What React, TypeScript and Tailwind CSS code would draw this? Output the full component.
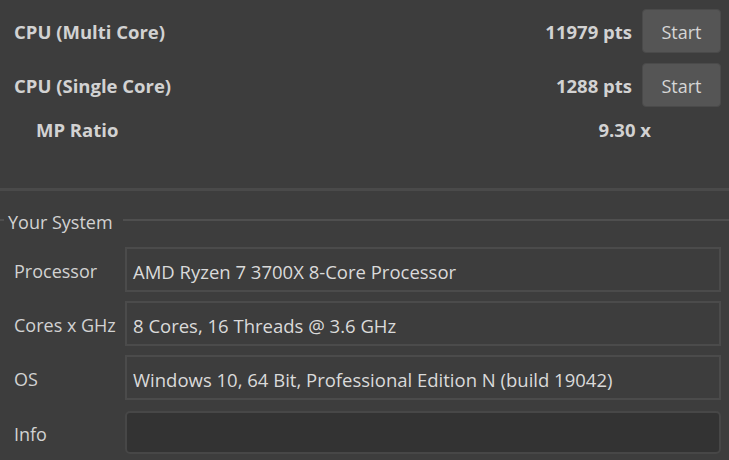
const FONT = "font-['Open_Sans','Noto_Sans',sans-serif]";

function ScoreRow({ label, score }: { label: string; score: string }) {
  return (
    <div className="flex items-center h-[44px] mb-[10px]">
      <p className="flex-1 font-bold text-[18.5px] text-[#d2d2d2] pt-[2px]">{label}</p>
      <p className="font-bold text-[18.5px] text-[#d2d2d2] mr-[10px] pt-[2px]">{score}</p>
      <button
        type="button"
        className="w-[79px] h-[44px] rounded-[4px] bg-[#555555] border border-[#4a4a4a] text-[18px] text-[#d6d6d6] pt-[2px]"
      >
        Start
      </button>
    </div>
  );
}

function InfoRow({ label, value, last }: { label: string; value?: string; last?: boolean }) {
  return (
    <div className={`flex items-center ${last ? "mt-[2px]" : ""}`}>
      <p className="w-[125px] pl-[14px] pt-[4px] text-[18px] text-[#d2d2d2] whitespace-nowrap">{label}</p>
      {last ? (
        <div className="flex-1 h-[43px] mr-[8px] rounded-[5px] border-2 border-[#474747] bg-[#333333]" />
      ) : (
        <div className="flex-1 h-[45px] mr-[8px] border-2 border-[#4b4b4b] flex items-center px-[6px] pt-[4px]">
          <p className="text-[18.5px] text-[#dadada] whitespace-nowrap">{value}</p>
        </div>
      )}
    </div>
  );
}

export default function App() {
  return (
    <div className={`w-[729px] h-[460px] bg-[#3d3d3d] overflow-hidden ${FONT}`}>
      {/* Benchmarks */}
      <div className="h-[188px] pt-[9px] pl-[14px] pr-[8px]">
        <ScoreRow label="CPU (Multi Core)" score="11979 pts" />
        <ScoreRow label="CPU (Single Core)" score="1288 pts" />
        <div className="flex items-center h-[26px] pl-[22px] mr-[70px] mt-[2px]">
          <p className="flex-1 font-bold text-[18.5px] text-[#d2d2d2]">MP Ratio</p>
          <p className="font-bold text-[18.5px] text-[#d2d2d2]">9.30 x</p>
        </div>
      </div>

      <div className="h-[3px] bg-[#4a4a4a]" />

      {/* Your System */}
      <div className="flex items-center h-[22px] mt-[18px]">
        <div className="w-[4px] h-[2px] bg-[#4f4f4f]" />
        <p className="px-[4px] pt-[4px] text-[18px] text-[#d2d2d2] leading-[22px]">Your System</p>
        <div className="flex-1 ml-[6px] h-[2px] bg-[#4f4f4f]" />
      </div>

      <div className="flex flex-col gap-[9px] mt-[16px]">
        <InfoRow label="Processor" value="AMD Ryzen 7 3700X 8-Core Processor" />
        <InfoRow label="Cores x GHz" value="8 Cores, 16 Threads @ 3.6 GHz" />
        <InfoRow label="OS" value="Windows 10, 64 Bit, Professional Edition N (build 19042)" />
        <InfoRow label="Info" last />
      </div>
    </div>
  );
}
